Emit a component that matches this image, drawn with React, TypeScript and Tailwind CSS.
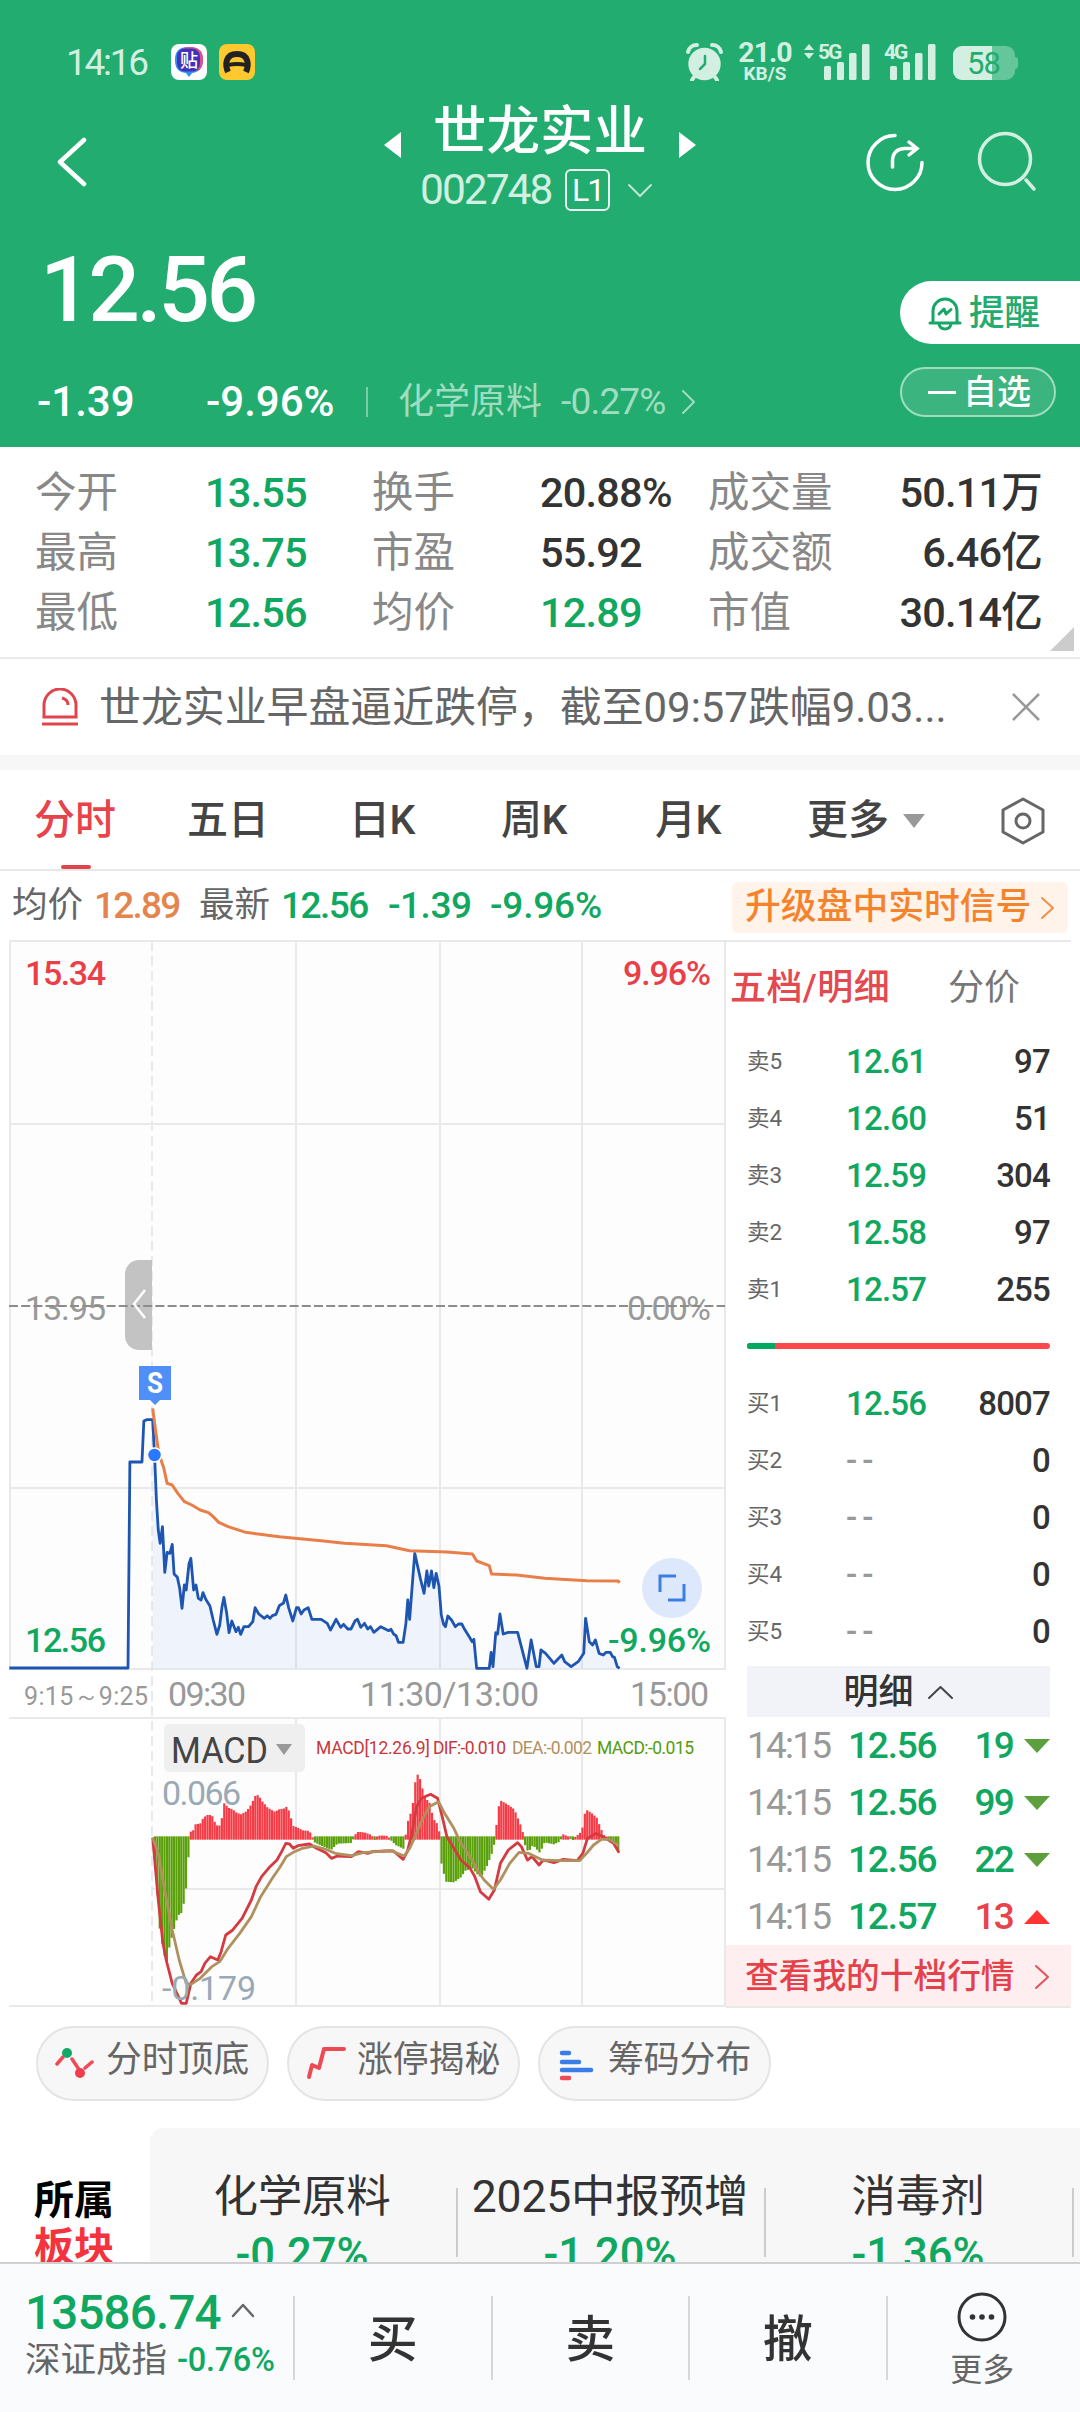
import type { ReactNode } from "react";

type Level = { label: string; price: string; volume: string };

const stats = [
  [["今开", "13.55", true], ["换手", "20.88%", false], ["成交量", "50.11万", false]],
  [["最高", "13.75", true], ["市盈", "55.92", false], ["成交额", "6.46亿", false]],
  [["最低", "12.56", true], ["均价", "12.89", true], ["市值", "30.14亿", false]],
] as [string, string, boolean][][];

const asks: Level[] = [
  { label: "卖5", price: "12.61", volume: "97" },
  { label: "卖4", price: "12.60", volume: "51" },
  { label: "卖3", price: "12.59", volume: "304" },
  { label: "卖2", price: "12.58", volume: "97" },
  { label: "卖1", price: "12.57", volume: "255" },
];

const bids: Level[] = [
  { label: "买1", price: "12.56", volume: "8007" },
  { label: "买2", price: "--", volume: "0" },
  { label: "买3", price: "--", volume: "0" },
  { label: "买4", price: "--", volume: "0" },
  { label: "买5", price: "--", volume: "0" },
];

const ticks = [
  { price: "12.56", volume: "19", up: false },
  { price: "12.56", volume: "99", up: false },
  { price: "12.56", volume: "22", up: false },
  { price: "12.57", volume: "13", up: true },
];

const boards = [
  { name: "化学原料", change: "-0.27%" },
  { name: "2025中报预增", change: "-1.20%" },
  { name: "消毒剂", change: "-1.36%" },
];

// Chart series, x in 1/2.148 px and y in 1/3 px units
const auctionLine = "20,984 275,984 279,366 305,366 309,243 316,239 328,239 ";
const priceLine =
  "328,239 332,345 336,480 340,570 344,610 349,560 354,697 359,637 365,640 370,613 374,702 381,712 386,745 391,805 396,735 400,750 406,672 410,655 416,750 421,735 426,775 432,780 436,758 442,778 451,798 458,840 466,883 472,855 477,800 481,772 487,820 492,878 498,843 507,875 512,862 517,883 524,860 534,860 543,845 548,803 556,822 568,835 574,827 580,835 585,827 593,823 600,797 609,789 614,765 620,803 629,843 637,803 641,803 647,822 653,810 662,803 670,838 690,838 703,850 710,870 722,838 732,862 738,853 747,867 754,867 763,842 768,838 775,862 783,850 790,867 796,860 803,877 818,860 835,872 840,868 846,883 851,887 856,907 866,907 872,850 876,780 880,838 887,710 891,640 903,715 911,760 917,693 921,738 927,693 932,743 937,700 943,738 948,825 953,853 957,860 962,828 970,840 978,860 985,852 992,852 998,868 1008,890 1014,905 1018,898 1024,985 1051,985 1055,937 1059,980 1065,878 1069,882 1074,822 1081,882 1092,877 1112,877 1132,985 1141,900 1152,980 1158,980 1162,930 1172,940 1190,970 1207,945 1213,965 1227,980 1242,965 1254,940 1258,835 1266,905 1273,915 1279,900 1287,940 1296,945 1302,937 1311,937 1316,950 1320,952 1326,980 1331,985";
const averageLine =
  "328,205 334,270 341,340 352,385 359,430 370,435 382,460 396,485 412,495 430,510 448,518 458,530 470,547 490,560 528,577 600,590 690,602 740,610 830,617 880,632 960,636 1015,642 1024,663 1051,677 1056,702 1110,705 1170,715 1260,722 1328,723 1331,728";
const difLine =
  "328,413 340,600 350,730 357,780 370,850 385,895 390,910 400,910 410,850 422,825 432,815 440,790 452,770 468,780 475,755 485,705 500,690 520,655 540,600 550,560 562,530 580,500 595,480 605,455 614,430 622,432 630,445 640,437 665,432 680,445 700,458 712,475 725,468 755,470 770,455 790,460 800,455 830,453 845,453 855,465 866,478 875,455 885,400 895,320 905,295 925,283 940,295 950,350 960,410 975,445 990,480 1010,505 1020,530 1032,575 1050,598 1062,570 1075,490 1092,450 1112,428 1120,440 1133,480 1143,470 1158,495 1167,480 1190,488 1210,478 1240,482 1252,460 1262,415 1280,400 1292,408 1305,418 1318,430 1330,458";
const deaLine =
  "328,413 340,460 355,580 370,690 385,780 400,850 410,853 430,835 455,800 472,785 490,745 515,700 540,650 560,590 585,535 602,500 615,470 630,457 650,445 675,438 700,448 720,460 755,467 780,458 840,452 868,468 880,445 890,415 905,365 922,320 942,305 955,340 975,385 990,430 1012,475 1025,510 1040,540 1060,568 1075,540 1095,490 1115,457 1135,460 1165,480 1200,482 1245,482 1260,460 1275,435 1292,418 1310,418 1322,430 1330,435";

const histogram: [number, number][] = [
  [330, 0], [335, -100], [340, -210], [345, -300], [350, -320], [357, -380], [363, -330], [370, -290],
  [375, -265], [382, -230], [392, -220], [397, -170], [402, -130], [405, -50], [408, -50], [410, 20],
  [415, 22], [420, 40], [430, 42], [437, 60], [445, 68], [455, 68], [462, 45], [470, 30], [477, 60],
  [482, 105], [490, 90], [500, 85], [508, 75], [518, 70], [530, 80], [540, 100], [548, 125], [555, 128],
  [563, 110], [575, 90], [590, 78], [600, 85], [612, 88], [617, 95], [622, 75], [630, 35], [640, 30],
  [650, 22], [665, 20], [670, 5], [676, -10], [690, -20], [712, -32], [725, -14], [755, -12], [762, 8],
  [770, 18], [785, 15], [798, 8], [804, -4], [812, 6], [830, 6], [840, -4], [850, -18], [868, -30],
  [875, 45], [880, 60], [888, 110], [892, 165], [896, 192], [902, 178], [908, 145], [915, 115], [922, 110],
  [928, 75], [935, 45], [942, 42], [945, -5], [948, -70], [952, -95], [958, -128], [975, -130], [990, -115],
  [1000, -95], [1015, -88], [1025, -105], [1033, -115], [1045, -85], [1055, -50], [1060, -30], [1064, 5],
  [1066, 30], [1070, 85], [1075, 112], [1090, 100], [1105, 85], [1115, 50], [1122, 25], [1127, -15],
  [1135, -40], [1145, -18], [1160, -42], [1170, -10], [1190, -16], [1202, -8], [1210, 10], [1222, 3],
  [1230, -4], [1243, 10], [1250, 20], [1258, 85], [1270, 75], [1282, 60], [1290, 30], [1297, 8],
  [1303, 3], [1310, -4], [1322, -10], [1332, -48],
];

function valueAt(x: number) {
  const i = histogram.findIndex(([px]) => px >= x);
  if (i <= 0) return histogram[0][1];
  const [x0, y0] = histogram[i - 1];
  const [x1, y1] = histogram[i];
  return y0 + ((y1 - y0) * (x - x0)) / (x1 - x0);
}

const bars = Array.from({ length: 195 }, (_, i) => {
  const x = 333 + i * 5.13;
  return { x, h: valueAt(x) };
});

function Chevron({ d, w, h, stroke, sw = 2.5 }: { d: string; w: number; h: number; stroke: string; sw?: number }) {
  return (
    <svg width={w} height={h} viewBox={`0 0 ${w} ${h}`} fill="none" className="shrink-0">
      <path d={d} stroke={stroke} strokeWidth={sw} strokeLinecap="round" strokeLinejoin="round" />
    </svg>
  );
}

function Signal() {
  return (
    <svg width="46" height="37" viewBox="0 0 46 37" fill="#d3efe1">
      <rect x="0" y="22" width="7" height="14" rx="1.5" />
      <rect x="13" y="18" width="7" height="18" rx="1.5" />
      <rect x="25" y="9" width="7.5" height="27" rx="1.5" />
      <rect x="38" y="0" width="7.5" height="36" rx="1.5" />
    </svg>
  );
}

function StatusBar() {
  return (
    <div className="flex h-[108px] items-start pl-[66px] pt-[44px] text-[#d3efe1]">
      <div className="w-[105px] pt-[1px] text-[37px] leading-9 tracking-[-2.3px]">14:16</div>
      <svg width="84" height="36" viewBox="0 0 84 36">
        <rect width="36" height="36" rx="8" fill="#fff" />
        <path d="M18 3c10 0 14 4 14 13 0 7-3 12-11 13l-3 4-3-4C7 28 4 24 4 16 4 7 8 3 18 3z" fill="#2f8df0" />
        <path d="M18 3c10 0 14 4 14 13 0 5-2 9-5 11L10 6c2-2 5-3 8-3z" fill="#e0508c" />
        <rect x="6" y="4.500" width="23" height="23" rx="8" fill="#4332b8" />
        <text x="9" y="22.500" fontSize="18" fontWeight="500" fill="#fff">贴</text>
        <rect x="48" width="36" height="36" rx="8" fill="#fdc92f" />
        <path d="M57 28c-3-7-3-18 9-18s12 11 9 18" fill="none" stroke="#222" strokeWidth="6" />
        <path d="M57 19c6-1.500 12-1.500 18 0v4c-6-1.500-12-1.500-18 0z" fill="#222" />
      </svg>
      <div className="flex-1" />
      <svg width="37" height="38" viewBox="0 0 37 38" className="mt-[-1px]">
        <circle cx="18.500" cy="21" r="16.200" fill="#d3efe1" />
        <path d="M2 9a9 9 0 0 1 9-7M35 9a9 9 0 0 0-9-7M8 34l-2 3M29 34l2 3" stroke="#d3efe1" strokeWidth="4" strokeLinecap="round" fill="none" />
        <path d="M19 13v8l-5 5" stroke="#22ac6f" strokeWidth="2.500" strokeLinecap="round" fill="none" />
      </svg>
      <div className="ml-[15px] mt-[-4px] flex w-[54px] flex-col items-center font-bold">
        <div className="text-[28.500px] leading-[25px] tracking-[-1px]">21.0</div>
        <div className="text-[19px] leading-[17px]">KB/S</div>
      </div>
      <div className="relative ml-[12px] w-[65px] pl-[20px]">
        <svg width="10" height="15" viewBox="0 0 10 15" fill="#d3efe1" className="absolute left-0 top-0">
          <path d="M5 0l5 6H0zM5 15l5-6H0z" />
        </svg>
        <div className="absolute left-[14px] top-[-4px] text-[21px] font-bold leading-6 tracking-[-2px]">5G</div>
        <Signal />
      </div>
      <div className="relative w-[66px] pl-[21px]">
        <div className="absolute left-[15px] top-[-4px] text-[21px] font-bold leading-6 tracking-[-2px]">4G</div>
        <Signal />
      </div>
      <svg width="66" height="34" viewBox="0 0 66 34" className="ml-[17px] mr-[62px] mt-[2px]">
        <path d="M10 0h44a9 9 0 0 1 9 9v2q3 0 3 3v6q0 3-3 3v2a9 9 0 0 1-9 9H10a9 9 0 0 1-9-9V9a9 9 0 0 1 9-9z" fill="#64c69a" />
        <path d="M10 0h30v34H10a9 9 0 0 1-9-9V9a9 9 0 0 1 9-9z" fill="#d3efe1" />
        <text x="15" y="28" fontSize="31" fill="#22ac6f" textLength="34">58</text>
      </svg>
    </div>
  );
}

function Header() {
  return (
    <header className="h-[447px] bg-[#22ac6f] text-white">
      <StatusBar />
      <div className="flex h-[110px] items-start">
        <div className="w-[383px] pl-[57px] pt-[29px]">
          <Chevron d="M27 3L3 25l24 22" w={30} h={50} stroke="#fff" sw={4.5} />
        </div>
        <div className="w-[314px]">
          <div className="flex h-[54px] items-center justify-between">
            <svg width="19" height="28" viewBox="0 0 19 28" className="mt-[20px]"><path d="M18 1v26L1 14z" fill="#fff" /></svg>
            <div className="mt-[-7px] text-[53.500px] font-medium leading-none">世龙实业</div>
            <svg width="19" height="28" viewBox="0 0 19 28" className="mt-[20px]"><path d="M1 1v26l17-13z" fill="#fff" /></svg>
          </div>
          <div className="flex h-[56px] items-center pl-[37px] text-[#d3efe1]">
            <span className="w-[145px] text-[42.500px] leading-none tracking-[-2px]">002748</span>
            <span className="flex h-[42px] w-[45px] items-center justify-center rounded-md border-2 border-[#e8f7ef] text-[32px] leading-none tracking-[-2px] text-white">L1</span>
            <span className="ml-[17px]"><Chevron d="M2 2l11 11L24 2" w={26} h={15} stroke="#bfe7d4" sw={2} /></span>
          </div>
        </div>
        <svg width="180" height="62" viewBox="0 0 180 62" fill="none" strokeLinecap="round" className="ml-[165px] mt-[22px]">
          <path d="M33 5.500a27 27 0 1 0 27 27M30.500 37v-6c0-8 5-12.500 12-12.500h10M47 12l8 6.500-8 6.500" stroke="#fff" strokeWidth="3.500" />
          <circle cx="143" cy="29" r="25.500" stroke="#d3efe1" strokeWidth="3.500" />
          <path d="M164 50l8 9" stroke="#d3efe1" strokeWidth="3.500" />
        </svg>
      </div>
      <div className="flex h-[138px]">
        <div className="w-[900px] pl-[40px] pt-[27px] text-[91px] font-medium leading-none tracking-[-3.500px]">12.56</div>
        <div className="mt-[63px] flex h-[63px] w-[180px] items-center rounded-l-full bg-white pl-[28px] text-[#22ac6f]">
          <svg width="34" height="36" viewBox="0 0 34 36" fill="none" stroke="#14a765" strokeWidth="3" strokeLinejoin="round" strokeLinecap="round">
            <path d="M5 27V16a12 12 0 0 1 24 0v11M2 28h30M11 29q1 5 6 5t6-5M11 19l5-5 2 5 5-4.500" />
          </svg>
          <span className="ml-[7px] mt-[2px] text-[35.500px] font-medium leading-none">提醒</span>
        </div>
      </div>
      <div className="flex h-[91px] items-center text-[42px] font-medium leading-none">
        <div className="w-[169px] pl-[37px]">-1.39</div>
        <div className="w-[197px] pl-[37px]">-9.96%</div>
        <div className="h-[30px] w-[2px] bg-[#7accab]" />
        <div className="w-[193px] pl-[30px] text-[36px] font-normal text-[#a0dcc0]">化学原料</div>
        <div className="w-[119px] text-[37px] font-normal tracking-[-0.800px] text-[#a0dcc0]">-0.27%</div>
        <Chevron d="M3 2l11 11L3 24" w={17} h={26} stroke="#a0dcc0" sw={2} />
        <div className="ml-auto mr-[24px] mt-[-19px] flex h-[50px] w-[156px] items-center rounded-full border-2 border-[#a0dcc0] bg-[#3bb47f] pl-[26px] text-[34px]">
          <span className="mr-[7px] h-[3px] w-[28px] bg-white" />
          自选
        </div>
      </div>
    </header>
  );
}

function Stats() {
  return (
    <section className="h-[212px] border-b-2 border-[#ebebeb] pt-[16px] text-[41.500px] leading-none">
      {stats.map((row, i) => (
        <div key={i} className="grid h-[60px] grid-cols-[170px_167px_168px_168px_170px_164px] items-center pl-[35px]">
          {row.map(([label, value, green], j) => (
            <Cell key={label} label={label} last={j === 2}>
              <span className={green ? "text-[#10a860]" : "text-[#333]"}>{value}</span>
            </Cell>
          ))}
        </div>
      ))}
      <svg width="24" height="24" viewBox="0 0 24 24" className="ml-[1050px] mt-[-16px]"><path d="M24 0v24H0z" fill="#ccc" /></svg>
    </section>
  );
}

function Cell({ label, last, children }: { label: string; last: boolean; children: ReactNode }) {
  return (
    <>
      <div className="text-[#888]">{label}</div>
      <div className={last ? "text-right font-medium tracking-[-0.800px]" : "font-medium tracking-[-0.800px]"}>{children}</div>
    </>
  );
}

function News() {
  return (
    <section className="flex h-[96px] items-center pl-[41px] text-[#666]">
      <svg width="38" height="38" viewBox="0 0 38 38" fill="none" stroke="#e0454d" strokeWidth="3" className="shrink-0">
        <path d="M3 29V17a16 16 0 0 1 32 0v12zM1 36h36M21 10c4 1 6 3 6 7" />
      </svg>
      <div className="ml-[20px] mt-[2px] w-[913px] whitespace-nowrap text-[41.900px] leading-none">世龙实业早盘逼近跌停，截至09:57跌幅9.03...</div>
      <svg width="28" height="28" viewBox="0 0 28 28" stroke="#999" strokeWidth="2.500"><path d="M1 1l26 26M27 1L1 27" /></svg>
    </section>
  );
}

function PeriodTabs() {
  return (
    <nav className="relative flex h-[101px] items-center border-b-2 border-[#e8e8e8] pt-[2px] text-[41px] font-medium leading-none text-[#444]">
      <div className="w-[187px] pl-[34px] text-[#e8424a]">分时</div>
      <div className="w-[162px]">五日</div>
      <div className="w-[152px] tracking-[-0.500px]">日K</div>
      <div className="w-[154px] tracking-[-0.500px]">周K</div>
      <div className="w-[152px] tracking-[-0.500px]">月K</div>
      <div className="w-[96px]">更多</div>
      <svg width="22" height="14" viewBox="0 0 22 14"><path d="M0 0h22L11 14z" fill="#999" /></svg>
      <svg width="46" height="48" viewBox="0 0 46 48" fill="none" stroke="#666" strokeWidth="3" strokeLinejoin="round" className="ml-[75px]">
        <path d="M23 2l20 11v22L23 46 3 35V13z" />
        <circle cx="23" cy="24" r="7" />
      </svg>
      <div className="absolute bottom-0 left-[61px] h-[4px] w-[30px] rounded-full bg-[#e0444c]" />
    </nav>
  );
}

function Summary() {
  return (
    <div className="flex h-[69px] items-center text-[37px] leading-none">
      <div className="w-[94px] pl-[12px] text-[35.500px] text-[#666]">均价</div>
      <div className="w-[105px] font-medium tracking-[-1.800px] text-[#e5854e]">12.89</div>
      <div className="w-[82px] text-[35.500px] text-[#666]">最新</div>
      <div className="w-[107px] font-medium tracking-[-1.500px] text-[#10a860]">12.56</div>
      <div className="w-[102px] font-medium tracking-[-0.500px] text-[#10a860]">-1.39</div>
      <div className="w-[242px] font-medium tracking-[-0.200px] text-[#10a860]">-9.96%</div>
      <div className="mt-[3px] flex h-[51px] w-[336px] items-center justify-between rounded-md bg-[#fff3ea] pl-[13px] pr-[13px] pt-[2px] text-[35.800px] font-medium text-[#f5832c]">
        升级盘中实时信号
        <Chevron d="M2 2l11 10L2 22" w={15} h={24} stroke="#f0904a" sw={2} />
      </div>
    </div>
  );
}

function Chart() {
  return (
    <svg width="726" height="1068" viewBox="0 940 726 1068" className="shrink-0 font-[Roboto]" fontFamily="Roboto">
      <rect x="10" y="941" width="715" height="728" fill="#fdfdfd" />
      <rect x="152" y="1718" width="573" height="289" fill="#fdfdfd" />
      <g stroke="#e9e9e9" strokeWidth="2">
        <path d="M9 941h717M10 941v728M725 941v728M9 1124h716M9 1488h716M9 1669h717M9 1718h717M9 2006h717M152 1889h573M725 1718v289" />
        <path d="M296 941v728M440 941v728M582 941v728M296 1718v289M440 1718v289M582 1718v289" />
        <path d="M152 941v1066" strokeDasharray="10 5" />
      </g>

      <g fontSize="34" fontWeight="500">
        <text x="25" y="985" fill="#ea3f48" textLength="81">15.34</text>
        <text x="623" y="985" fill="#ea3f48" textLength="88">9.96%</text>
        <text x="25" y="1320" fill="#999" fontWeight="400" textLength="81">13.95</text>
        <text x="627" y="1320" fill="#999" fontWeight="400" textLength="84">0.00%</text>
        <text x="25" y="1652" fill="#10a860" textLength="81">12.56</text>
      </g>

      <path d="M152 1260h-13a14 14 0 0 0-14 14v62a14 14 0 0 0 14 14h13z" fill="#c3c3c3" />
      <path d="M9 1306h716" stroke="#8c8c8c" strokeWidth="2" strokeDasharray="9 3.200" />
      <path d="M145 1290l-11 14 11 14" fill="none" stroke="#fff" strokeWidth="2.500" />

      <g transform="translate(0 1340) scale(0.4655 0.33333)" fill="none" strokeLinejoin="round">
        <polygon points={`328,985 ${priceLine}`} fill="#3b82f6" fillOpacity="0.08" />
        <polyline points={auctionLine + priceLine} stroke="#1d55b0" strokeWidth="2.800" vectorEffect="non-scaling-stroke" />
        <polyline points={averageLine} stroke="#e87e48" strokeWidth="3" vectorEffect="non-scaling-stroke" />
      </g>
      <circle cx="154.500" cy="1455" r="7" fill="#2979ff" stroke="#fff" strokeWidth="1.500" />
      <path d="M139 1366h32v34h-11l-5 5-5-5h-11z" fill="#4f8ff7" />
      <text x="155" y="1393" fontSize="29" fontWeight="700" fill="#fff" textAnchor="middle" textLength="16" lengthAdjust="spacingAndGlyphs">S</text>
      <circle cx="672" cy="1588" r="30" fill="#dde8fd" />
      <path d="M660 1592v-16h16M684 1584v16h-16" fill="none" stroke="#3a80e4" strokeWidth="3" />
      <text x="608" y="1652" fontSize="34" fontWeight="500" fill="#10a860" textLength="103">-9.96%</text>

      <g fill="#999" fontSize="34">
        <text x="24" y="1705" fontSize="25" textLength="124">9:15～9:25</text>
        <text x="168" y="1706" textLength="78">09:30</text>
        <text x="360" y="1706" textLength="179">11:30/13:00</text>
        <text x="630" y="1706" textLength="79">15:00</text>
      </g>

      <rect x="164" y="1724" width="141" height="48" rx="5" fill="#efefef" />
      <text x="171" y="1763" fontSize="36" fill="#444" textLength="97" lengthAdjust="spacingAndGlyphs">MACD</text>
      <path d="M276 1744h16l-8 11z" fill="#999" />
      <g fontSize="17.500">
        <text x="316" y="1754" fill="#c8383e" textLength="114">MACD[12.26.9]</text>
        <text x="433" y="1754" fill="#c8383e" textLength="73">DIF:-0.010</text>
        <text x="512" y="1754" fill="#b0905f" textLength="80">DEA:-0.002</text>
        <text x="597" y="1754" fill="#549c0c" textLength="97">MACD:-0.015</text>
      </g>
      <text x="162" y="1805" fontSize="34" fill="#9aa9b5" textLength="79">0.066</text>
      <g transform="translate(0 1700) scale(0.4655 0.33333)" fill="none" strokeLinejoin="round">
        {bars.map(({ x, h }) => (
          <rect
            key={x}
            x={x - 2.4}
            y={h > 0 ? 413 - h : 409}
            width="4.700"
            height={h > 0 ? h + 6 : 8 - h}
            fill={h > 0 ? "#f53b45" : "#5aa00a"}
          />
        ))}
        <polyline points={difLine} stroke="#d33b40" strokeWidth="2.800" vectorEffect="non-scaling-stroke" />
        <polyline points={deaLine} stroke="#b0905f" strokeWidth="2.800" vectorEffect="non-scaling-stroke" />
      </g>
      <text x="162" y="2000" fontSize="34" fill="#9aa9b5" textLength="94">-0.179</text>
    </svg>
  );
}

function LevelRow({ label, price, volume }: Level) {
  const empty = price === "--";
  return (
    <div className="flex h-[57px] items-center pr-[30px] text-[33px] font-medium leading-none tracking-[-0.800px]">
      <div className="w-[99px] text-[22.500px] font-normal tracking-[0px] text-[#666]">{label}</div>
      <div className={empty ? "tracking-[5px] text-[#999]" : "text-[#10a860]"}>{price}</div>
      <div className="ml-auto text-[#333]">{volume}</div>
    </div>
  );
}

function OrderBook() {
  return (
    <aside className="flex-1">
      <div className="mr-[9px] border-t-2 border-[#e9e9e9]" />
      <div className="flex h-[91px] items-center pl-[4px] text-[36px] leading-none">
        <div className="w-[218px] font-medium tracking-[0.400px] text-[#e4494f]">五档/明细</div>
        <div className="text-[#777]">分价</div>
      </div>
      <div className="pl-[21px]">
        {asks.map((level) => (
          <LevelRow key={level.label} {...level} />
        ))}
        <div className="mb-[26.5px] mt-[24.5px] flex h-[6px] w-[303px] overflow-hidden rounded-full bg-[#fc474c]">
          <div className="w-[28px] bg-[#00a960]" />
        </div>
        {bids.map((level) => (
          <LevelRow key={level.label} {...level} />
        ))}
        <div className="mt-[6px] flex h-[51px] w-[303px] items-center justify-center gap-[13px] bg-[#f2f3f8] pt-[2px] text-[35px] font-medium leading-none text-[#333]">
          明细
          <Chevron d="M2 13L13.500 2 25 13" w={27} h={15} stroke="#444" sw={2} />
        </div>
        {ticks.map(({ price, volume, up }, i) => (
          <div key={i} className="flex h-[57px] items-center text-[37px] leading-none tracking-[-1.800px]">
            <div className="w-[101px]  text-[#999]">14:15</div>
            <div className="w-[90px] font-medium tracking-[-1.200px] text-[#10a860]">{price}</div>
            <div className={up ? "w-[75px] text-right font-medium text-[#e8424a]" : "w-[75px] text-right font-medium text-[#10a860]"}>{volume}</div>
            <svg width="26" height="14" viewBox="0 0 26 14" className="ml-[11px]">
              {up ? <path d="M13 0l13 14H0z" fill="#ff3535" /> : <path d="M0 0h26L13 14z" fill="#5c9f3c" />}
            </svg>
          </div>
        ))}
      </div>
      <div className="mr-[9px] flex h-[63px] items-center border-b-2 border-[#e9e9e9] bg-[#feeeef] pl-[19px] pt-[2px] text-[33.700px] font-medium leading-none text-[#e4424a]">
        <div className="w-[289px]">查看我的十档行情</div>
        <Chevron d="M2 2l12 11L2 24" w={16} h={26} stroke="#e4525a" sw={2} />
      </div>
    </aside>
  );
}

function Chip({ label, children }: { label: string; children: ReactNode }) {
  return (
    <div className="flex h-[75px] w-[233px] items-center rounded-full border-2 border-[#e4e4e4] bg-[#f7f7f7] pl-[17px] text-[35.800px] leading-none text-[#666]">
      <svg width="40" height="36" viewBox="0 0 40 36" fill="none" strokeLinecap="round" strokeLinejoin="round">{children}</svg>
      <span className="mb-[5px] ml-[11px]">{label}</span>
    </div>
  );
}

function Chips() {
  return (
    <div className="flex h-[120px] gap-[18px] pl-[36px] pt-[18px]">
      <Chip label="分时顶底">
        <path d="M2 18l6-7M17 13l6 9M30 22l7-6" stroke="#ef4a55" strokeWidth="3.500" />
        <circle cx="12" cy="7" r="5" fill="#12a866" />
        <circle cx="25" cy="27" r="5" fill="#f03e4c" />
      </Chip>
      <Chip label="涨停揭秘">
        <path d="M3 31l3-12 7 3 5-19h20" stroke="#ee4a55" strokeWidth="4" />
      </Chip>
      <Chip label="筹码分布">
        <path d="M5 7h7M5 16h17M5 24h29" stroke="#3a7de6" strokeWidth="4.500" />
        <path d="M5 32h7" stroke="#ee4a55" strokeWidth="4.500" />
      </Chip>
    </div>
  );
}

function Boards() {
  return (
    <section className="flex h-[134px] overflow-hidden">
      <div className="w-[150px] pl-[34px] pt-[49px] text-[40px] font-bold leading-[47px]">
        <div className="text-black">所属</div>
        <div className="text-[#f5333f]">板块</div>
      </div>
      <div className="flex flex-1 rounded-tl-[14px] bg-[#f7f7f7]">
        {boards.map(({ name, change }) => (
          <div key={name} className="relative w-[308px] pr-[4px] pt-[41px] text-center text-[44.500px] leading-[57px]">
            <div className="whitespace-nowrap tracking-[-0.200px] text-[#333]">{name}</div>
            <div className="text-[43.500px] font-medium text-[#10a860]">{change}</div>
            <div className="absolute right-0 top-[60px] h-[69px] w-[2px] bg-[#ccc]" />
          </div>
        ))}
      </div>
    </section>
  );
}

function BottomBar() {
  return (
    <footer className="flex h-[151px] border-t-2 border-[#d0d0d2] bg-[#fafbfd] leading-none">
      <div className="w-[293px] pl-[25px] pt-[26px]">
        <div className="flex items-center">
          <span className="w-[206px] text-[47.500px] font-medium tracking-[-0.800px] text-[#10a860]">13586.74</span>
          <span className="mb-[6px]"><Chevron d="M2 13L12 2l10 11" w={25} h={15} stroke="#666" /></span>
        </div>
        <div className="mt-[5px] flex items-center whitespace-nowrap text-[35.500px] text-[#666]">
          <span className="w-[152px]">深证成指</span>
          <span className="text-[32.500px] font-medium tracking-[-0.300px] text-[#10a860]">-0.76%</span>
        </div>
      </div>
      {["买", "卖", "撤"].map((label) => (
        <div key={label} className="flex w-[197.500px] items-center">
          <div className="mt-[-2px] h-[84px] w-[2px] bg-[#d6d7d9]" />
          <div className="flex-1 pt-[2px] text-center text-[50px] font-medium text-[#333]">{label}</div>
        </div>
      ))}
      <div className="flex flex-1 items-center">
        <div className="mt-[-2px] h-[84px] w-[2px] bg-[#d6d7d9]" />
        <div className="flex flex-1 flex-col items-center pr-[3px] text-[32px] text-[#666]">
          <svg width="50" height="50" viewBox="0 0 50 50">
            <circle cx="25" cy="25" r="23" fill="none" stroke="#333" strokeWidth="3" />
            <circle cx="15.500" cy="25" r="2.800" fill="#333" />
            <circle cx="25" cy="25" r="2.800" fill="#333" />
            <circle cx="34.500" cy="25" r="2.800" fill="#333" />
          </svg>
          <span className="mt-[12px]">更多</span>
        </div>
      </div>
    </footer>
  );
}

export default function App() {
  return (
    <div className="h-[2412px] w-[1080px] overflow-hidden bg-white font-['Roboto','Noto_Sans_CJK_SC',sans-serif]">
      <Header />
      <Stats />
      <News />
      <div className="h-[15px] bg-[#f7f7f7]" />
      <PeriodTabs />
      <Summary />
      <div className="flex h-[1068px]">
        <Chart />
        <OrderBook />
      </div>
      <Chips />
      <Boards />
      <BottomBar />
    </div>
  );
}
